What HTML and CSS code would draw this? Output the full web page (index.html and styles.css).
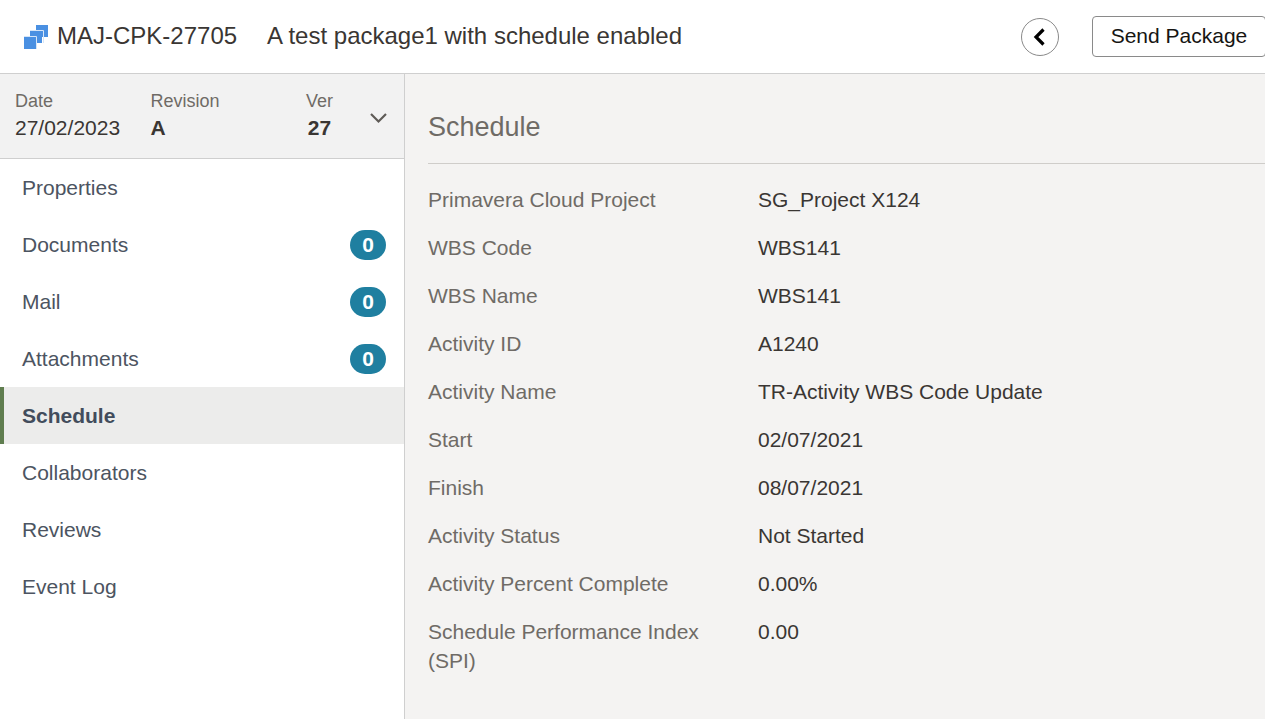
FILE: index.html
```html
<!DOCTYPE html>
<html lang="en">
<head>
<meta charset="utf-8">
<title>Package schedule</title>
<link rel="stylesheet" href="styles.css">
</head>
<body>
<header class="topbar">
  <svg class="logo" width="24" height="24" viewBox="0 0 24 24" aria-hidden="true">
    <rect class="logo-fill" x="12" y="0" width="12" height="12"/>
    <path class="logo-gap" d="M6 5.500h13.500V18"/>
    <rect class="logo-fill" x="6" y="6" width="12" height="12"/>
    <path class="logo-gap" d="M0 11.500h12.500V24"/>
    <rect class="logo-fill" x="0" y="12" width="12" height="12"/>
  </svg>
  <span class="pkg-id">MAJ-CPK-27705</span>
  <span class="pkg-title">A test package1 with schedule enabled</span>
  <button class="back-btn" aria-label="Back">
    <svg width="14" height="20" viewBox="0 0 14 20" aria-hidden="true"><path class="back-icon" d="M10.500 2.500 3 10l7.500 7.500"/></svg>
  </button>
  <button class="send-btn">Send Package</button>
</header>
<div class="body-row">
  <aside class="sidebar">
    <div class="meta">
      <div class="meta-col col-date"><span class="meta-label">Date</span><span class="meta-value">27/02/2023</span></div>
      <div class="meta-col col-rev"><span class="meta-label">Revision</span><span class="meta-value strong">A</span></div>
      <div class="meta-col col-ver"><span class="meta-label">Ver</span><span class="meta-value strong">27</span></div>
      <svg class="chev" width="18" height="14" viewBox="0 0 18 14" aria-hidden="true"><path class="chev-path" d="M1 4l7.500 7.500L16 4"/></svg>
    </div>
    <nav class="nav">
      <a class="nav-item">Properties</a>
      <a class="nav-item">Documents<span class="badge">0</span></a>
      <a class="nav-item">Mail<span class="badge">0</span></a>
      <a class="nav-item">Attachments<span class="badge">0</span></a>
      <a class="nav-item active">Schedule</a>
      <a class="nav-item">Collaborators</a>
      <a class="nav-item">Reviews</a>
      <a class="nav-item">Event Log</a>
    </nav>
  </aside>
  <main class="content">
    <h1 class="section-title">Schedule</h1>
    <dl class="fields">
      <div class="field"><dt>Primavera Cloud Project</dt><dd>SG_Project X124</dd></div>
      <div class="field"><dt>WBS Code</dt><dd>WBS141</dd></div>
      <div class="field"><dt>WBS Name</dt><dd>WBS141</dd></div>
      <div class="field"><dt>Activity ID</dt><dd>A1240</dd></div>
      <div class="field"><dt>Activity Name</dt><dd>TR-Activity WBS Code Update</dd></div>
      <div class="field"><dt>Start</dt><dd>02/07/2021</dd></div>
      <div class="field"><dt>Finish</dt><dd>08/07/2021</dd></div>
      <div class="field"><dt>Activity Status</dt><dd>Not Started</dd></div>
      <div class="field"><dt>Activity Percent Complete</dt><dd>0.00%</dd></div>
      <div class="field"><dt>Schedule Performance Index (SPI)</dt><dd>0.00</dd></div>
    </dl>
  </main>
</div>
</body>
</html>
```
FILE: styles.css
```css
* { box-sizing: border-box; }
html, body { height: 100%; }
body {
  margin: 0;
  font-family: "Liberation Sans", Arial, sans-serif;
  color: #3a3633;
  background: #fff;
  overflow: hidden;
  display: flex;
  flex-direction: column;
}
.topbar {
  height: 74px;
  flex: none;
  display: flex;
  align-items: center;
  padding-left: 24px;
  border-bottom: 1px solid #cfcfcf;
  background: #fff;
  overflow: hidden;
}
.logo { flex: none; margin-right: 9px; }
.logo-fill { fill: #4a90e2; }
.logo-gap { fill: none; stroke: #d5e5f8; stroke-width: 1; }
.pkg-id { font-size: 24px; margin: 0 30px 2px 0; color: #3a3633; }
.pkg-title { font-size: 24px; flex: 1; margin-bottom: 2px; color: #3a3633; }
.back-btn {
  width: 38px;
  height: 38px;
  padding: 0;
  border: 1px solid #8a8a8a;
  border-radius: 50%;
  background: #fff;
  display: flex;
  align-items: center;
  justify-content: center;
  margin-right: 33px;
}
.back-icon { fill: none; stroke: #000; stroke-width: 3.200; }
.send-btn {
  width: 174px;
  height: 41px;
  flex: none;
  margin-right: -1px;
  padding: 0 0 2px;
  border: 1px solid #8a8a8a;
  border-radius: 4px;
  background: #fff;
  font: 21px "Liberation Sans", Arial, sans-serif;
  color: #161513;
}
.body-row { flex: 1; display: flex; min-height: 0; }
.sidebar {
  width: 405px;
  flex: none;
  border-right: 1px solid #cfcfcf;
  background: #fff;
}
.meta {
  height: 85px;
  display: flex;
  align-items: flex-start;
  padding: 15px 0 0 15px;
  background: #f2f2f2;
  border-bottom: 1px solid #cfcfcf;
}
.meta-col { display: flex; flex-direction: column; }
.col-date { width: 135.500px; }
.col-rev { width: 155.500px; }
.col-ver { align-items: center; width: 27px; }
.meta-label { font-size: 18px; line-height: 24px; color: #6f6b66; }
.meta-value { font-size: 21px; line-height: 30px; color: #3a3633; }
.meta-value.strong { font-weight: 700; }
.chev { margin: 21px 0 0 37px; }
.chev-path { fill: none; stroke: #5f5b57; stroke-width: 2.200; }
.nav { display: flex; flex-direction: column; }
.nav-item {
  height: 57px;
  display: flex;
  align-items: center;
  justify-content: space-between;
  padding: 1px 18px 0 22px;
  font-size: 21px;
  color: #4c5461;
}
.nav-item.active {
  background: #ececeb;
  border-left: 4px solid #5f7d4f;
  padding-left: 18px;
  font-weight: 700;
  color: #424c5c;
}
.badge {
  width: 36px;
  height: 30px;
  margin-top: -1px;
  border-radius: 15px;
  background: #1f7fa0;
  color: #fff;
  font-size: 21px;
  font-weight: 700;
  display: flex;
  align-items: center;
  justify-content: center;
}
.content {
  flex: 1;
  min-width: 0;
  background: #f4f3f2;
  padding: 0 0 0 23px;
}
.section-title {
  margin: 0;
  height: 90px;
  padding-top: 36px;
  font-size: 27px;
  line-height: 34px;
  font-weight: 400;
  color: #6f6b66;
  border-bottom: 1px solid #cfcdca;
}
.fields { margin: 21px 0 0; }
.field { display: flex; font-size: 21px; line-height: 29px; margin-bottom: 19px; }
.field dt { width: 330px; flex: none; padding-right: 50px; color: #6f6b66; }
.field dd { margin: 0; color: #3a3633; }
```
